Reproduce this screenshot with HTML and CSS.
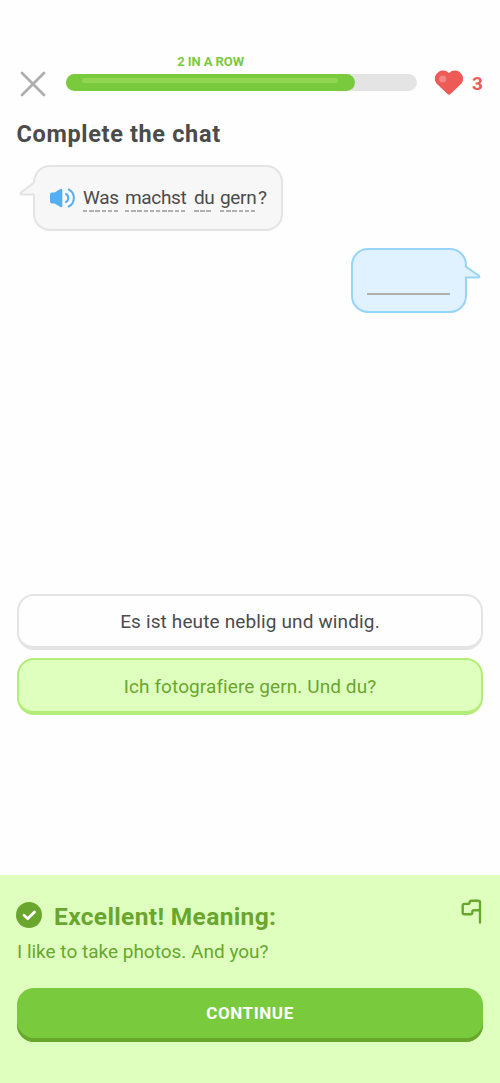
FILE: index.html
```html
<!DOCTYPE html>
<html lang="en">
<head>
<meta charset="utf-8">
<title>Complete the chat</title>
<link rel="stylesheet" href="styles.css">
</head>
<body>
<main class="screen">
  <header class="header">
    <svg class="close" width="26" height="26" viewBox="0 0 26 26"><path d="M2 2L24 24M24 2L2 24"/></svg>
    <div class="progress">
      <div class="streak"><span>2 IN A ROW</span></div>
      <div class="track"><div class="fill"><div class="shine"></div></div></div>
    </div>
    <svg class="heart" width="30" height="26" viewBox="0 0 30 26">
      <path d="M15 3C17.500 .4 20.500 0 23 .8C28.500 2.500 31 9 27.500 13.500L16.500 24Q15 25.300 13.500 24L2.500 13.500C-1 9 1.500 2.500 7 .8C9.500 0 12.500 .4 15 3Z" fill="#ee5a55"/>
      <circle cx="8.700" cy="9" r="3.600" fill="#f18785"/>
    </svg>
    <span class="lives">3</span>
  </header>
  <h1 class="title"><span>Complete the chat</span></h1>
  <section class="chat">
    <div class="bubble prompt">
      <svg class="tail-left" width="17" height="16" viewBox="0 0 17 16"><path d="M17 1L15.200 1.500L2 11.500Q.5 13.500 2.500 13.500H15.200H17Z" fill="#f7f7f7"/><path d="M15.200 1.500L2 11.500Q.5 13.500 2.500 13.500H15.200" fill="none" stroke="#e4e4e4" stroke-width="2"/></svg>
      <svg class="speaker" width="26" height="20" viewBox="0 0 26 20">
        <path d="M2 4.500H4.500L10.500 1Q12.300 .2 12.300 2V18Q12.300 19.800 10.500 19L4.500 15.500H2Q0 15.500 0 13.500V6.500Q0 4.500 2 4.500Z" fill="#56aef0"/>
        <path d="M16 6C19 7.500 19 12.500 16 14M18.800 1.500C25.500 5 25.500 15 18.800 18.500" fill="none" stroke="#56aef0" stroke-width="2" stroke-linecap="round"/>
      </svg>
      <p class="phrase"><span class="word was">Was</span><span class="word machst">machst</span><span class="word du">du</span><span class="word gern">gern</span><span>?</span></p>
    </div>
    <div class="bubble answer">
      <span class="blank"></span>
      <svg class="tail-right" width="17" height="16" viewBox="0 0 17 16"><path d="M0 1L1.500 2L14.500 11.500Q16.500 13.500 14 13.500H1.500H0Z" fill="#e0f2ff"/><path d="M1 2L14.500 11.500Q16.500 13.500 14 13.500H1" fill="none" stroke="#97d4f9" stroke-width="2"/></svg>
    </div>
  </section>
  <section class="options">
    <button class="option"><span>Es ist heute neblig und windig.</span></button>
    <button class="option selected"><span>Ich fotografiere gern. Und du?</span></button>
  </section>
  <footer class="feedback">
    <div class="result">
      <svg class="check" width="26" height="26" viewBox="0 0 26 26"><circle cx="13" cy="13" r="13" fill="#69a62e"/><path d="M8 13.300L11.700 16.700L18.500 10" fill="none" stroke="#fff" stroke-width="2.800" stroke-linecap="round" stroke-linejoin="round"/></svg>
      <h2 class="verdict"><span>Excellent! Meaning:</span></h2>
      <svg class="flag" width="21" height="25" viewBox="0 0 21 25"><path d="M19 23.500V3.500Q19 1.700 17.200 1.700H10.500Q8.700 1.700 8.700 3.300Q8.700 4.900 7 4.900H3.500Q1.700 4.900 1.700 6.700V13.500Q1.700 15.300 3.500 15.300H9.500Q11.300 15.300 11.300 13.200Q11.300 11.300 13 11.300H19"/></svg>
    </div>
    <p class="meaning"><span>I like to take photos. And you?</span></p>
    <button class="continue"><span>CONTINUE</span></button>
  </footer>
</main>
</body>
</html>
```
FILE: styles.css
```css
* { box-sizing: border-box; }
body { margin: 0; background: #fefefe; color: #4b4b4b; font-family: Roboto, sans-serif; }
h1, h2, p { margin: 0; }
svg { display: block; flex: none; }
button { font-family: inherit; display: flex; align-items: center; justify-content: center; width: 100%; margin: 0; }
.screen { height: 1083px; display: flex; flex-direction: column; }
.header { height: 96px; padding: 0 17px 0 20px; display: flex; align-items: flex-start; flex: none; }
.close { margin-top: 71px; fill: none; stroke: #afafaf; stroke-width: 2.8; stroke-linecap: round; }
.progress { flex: none; width: 351px; margin: 54px 0 0 20.300px; }
.streak { height: 20.300px; padding-left: 111px; font-size: 13px; line-height: 16px; font-weight: 700; color: #79ca3c; letter-spacing: -.08px; white-space: nowrap; }
.track { height: 17px; border-radius: 9px; background: #e4e4e4; }
.fill { width: 289px; height: 17px; border-radius: 9px; background: #79ca3c; padding: 4px 17px 0 16px; }
.shine { height: 5px; border-radius: 3px; background: #92d551; }
.heart { margin: 70px 0 0 16.700px; }
.lives { margin: 71px 0 0 8px; font-size: 19px; line-height: 25px; font-weight: 700; color: #ee5a55; }
.title { height: 69px; padding: 23px 0 0 16.500px; font-size: 23.5px; line-height: 30px; font-weight: 700; letter-spacing: .65px; white-space: nowrap; }
.chat { height: 429px; flex: none; display: flex; flex-direction: column; padding: 0 33px; }
.bubble { position: relative; border: 2px solid #e4e4e4; border-radius: 17px; background: #f7f7f7; }
.prompt { width: 250px; height: 66px; display: flex; align-items: center; padding-left: 15px; }
.tail-left { position: absolute; left: -16px; top: 14px; }
.speaker { margin-right: 7px; }
.phrase { display: flex; font-size: 19px; line-height: 27px; letter-spacing: -.35px; white-space: nowrap; }
.word { height: 28px; background: repeating-linear-gradient(90deg, #afafaf 0 4.5px, transparent 4.5px 6.2px) left bottom / 100% 2px no-repeat; }
.was { width: 36px; margin-right: 6px; }
.machst { width: 61px; margin-right: 8px; }
.du { width: 18px; margin-right: 8px; }
.gern { width: 37px; margin-right: 1px; }
.answer { align-self: flex-end; width: 116px; height: 65px; margin-top: 17px; border-color: #97d4f9; background: #e0f2ff; padding: 43px 15px 0 14px; }
.blank { display: block; height: 2px; background: #afafaf; }
.tail-right { position: absolute; right: -16px; top: 14px; }
.options { height: 280.600px; flex: none; padding: 0 17px; display: flex; flex-direction: column; gap: 8px; }
.option { height: 56px; border: 2px solid #e4e4e4; border-bottom-width: 4px; border-radius: 17px; background: #fefefe; color: #4b4b4b; font-size: 19px; letter-spacing: .14px; padding: 1px 0 0; }
.selected { height: 57px; border-color: #b3ec78; background: #dfffbf; color: #69a62e; letter-spacing: .09px; }
.feedback { flex: 1; background: #dfffbf; color: #69a62e; padding: 24.400px 17px 0; }
.result { display: flex; height: 40px; }
.check { margin: 3px 0 0 -1px; }
.verdict { margin-left: 12px; font-size: 24.5px; line-height: 36px; font-weight: 700; letter-spacing: .35px; white-space: nowrap; }
.flag { margin: 0 1px 0 auto; fill: none; stroke: #69a62e; stroke-width: 2.4; stroke-linecap: round; stroke-linejoin: round; }
.meaning { height: 49px; font-size: 19px; line-height: 26px; white-space: nowrap; }
.continue { height: 54px; border: 0; border-radius: 17px; background: #79ca3c; box-shadow: inset 0 -4px #69a62e; color: #fff; font-size: 17px; font-weight: 700; letter-spacing: .6px; padding: 0 0 4px; }
```
